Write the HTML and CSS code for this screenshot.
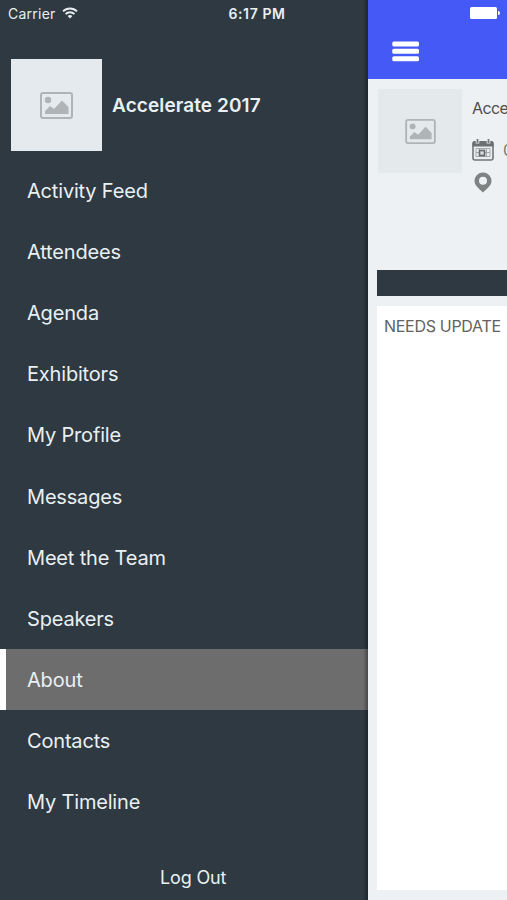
FILE: index.html
```
<!DOCTYPE html>
<html lang="en">
<head>
<meta charset="UTF-8">
<meta name="viewport" content="width=device-width, initial-scale=1.0">
<title>Accelerate 2017</title>
<link rel="stylesheet" href="styles.css">
</head>
<body>
<div class="app">
<nav class="drawer">
<div class="status-bar">
<span class="carrier">Carrier</span>
<svg class="wifi" width="16" height="12" viewBox="0 0 16 12" fill="none" stroke="#e6ecef" stroke-width="1.9">
<path d="M1 4.4a10 10 0 0 1 14 0"/>
<path d="M3.6 7a6.3 6.3 0 0 1 8.800 0"/>
<path d="M8 11.500L5.600 9.100a3.400 3.400 0 0 1 4.800 0z" fill="#e6ecef" stroke="none"/>
</svg>
<span class="time">6:17 PM</span>
</div>

<div class="event">
<div class="thumb">
<svg width="33" height="27" viewBox="0 0 33 27" fill="#b0b4b6">
<rect x="1" y="1" width="31" height="25" rx="2" fill="none" stroke="#b0b4b6" stroke-width="2"/>
<circle cx="8" cy="8" r="3.2"/>
<path d="M5 22v-3l5-5 4 3 8-8.500 6.500 6.500v7z"/>
</svg>
</div>
<div class="event-name">Accelerate 2017</div>
</div>

<ul class="menu">
<li class="menu-item">Activity Feed</li>
<li class="menu-item">Attendees</li>
<li class="menu-item">Agenda</li>
<li class="menu-item">Exhibitors</li>
<li class="menu-item">My Profile</li>
<li class="menu-item">Messages</li>
<li class="menu-item">Meet the Team</li>
<li class="menu-item">Speakers</li>
<li class="menu-item active">About</li>
<li class="menu-item">Contacts</li>
<li class="menu-item">My Timeline</li>
</ul>

<div class="logout"><span>Log Out</span></div>
</nav>

<main class="page">
<header class="page-header">
<svg class="battery" width="30" height="12" viewBox="0 0 30 12" fill="#fff">
<rect width="27" height="12" rx="1.500"/>
<path d="M28 4a2 2 0 0 1 0 4z"/>
</svg>
<svg class="burger" width="28" height="21" viewBox="0 0 28 21" fill="#fff">
<rect x="0.300" y="0.500" width="26.700" height="5" rx="1.500"/>
<rect x="0.300" y="7.800" width="26.700" height="5" rx="1.500"/>
<rect x="0.300" y="15.200" width="26.700" height="5" rx="1.500"/>
</svg>
</header>

<section class="summary">
<div class="thumb small">
<svg width="31" height="25" viewBox="0 0 33 27" fill="#b0b4b6">
<rect x="1" y="1" width="31" height="25" rx="2" fill="none" stroke="#b0b4b6" stroke-width="2"/>
<circle cx="8" cy="8" r="3.2"/>
<path d="M5 22v-3l5-5 4 3 8-8.500 6.500 6.500v7z"/>
</svg>
</div>
<div class="details">
<div class="title">Acce</div>
<div class="date">
<svg width="22" height="22" viewBox="0 0 22 22">
<rect x="1" y="3" width="20" height="18" rx="2" fill="#e9edef" stroke="#737678" stroke-width="1.600"/>
<path d="M0.500 7.500V4q0-2 2-2h17q2 0 2 2v3.500z" fill="#6d7072"/>
<path d="M5.500 0v4.500M16.500 0v4.500" stroke="#e9edef" stroke-width="3.600"/>
<path d="M5.500 0v4M16.500 0v4" stroke="#77797b" stroke-width="1.800"/>
<path d="M4 9.500h14v8H4zM4 13.500h14M7.500 9.500v8M14.500 9.500v8" fill="none" stroke="#a5a9ab"/>
<rect x="7.500" y="11.500" width="5" height="5" fill="#dde0e2" stroke="#686b6d" stroke-width="1.700"/>
</svg>
<span>0</span>
</div>
<div class="place">
<svg width="18" height="21" viewBox="0 0 18 21">
<path fill="#7f8283" fill-rule="evenodd" d="M9 0.500a8.500 8.500 0 0 1 8.500 8.500c0 4.500-4.500 7.500-8.500 11.500C5 16.500 0.500 13.500 0.500 9A8.500 8.500 0 0 1 9 0.500zM9 4.700a4 4 0 1 0 0 8 4 4 0 0 0 0-8z"/>
</svg>
</div>
</div>
</section>

<div class="divider"></div>
<section class="content">NEEDS UPDATE</section>
</main>
</div>
</body>
</html>
```

FILE: styles.css
```
* {
box-sizing: border-box;
}
body {
margin: 0;
font-family: Inter, "Liberation Sans", sans-serif;
background: #edf1f3;
}
.app {
display: flex;
width: 507px;
height: 900px;
overflow: hidden;
}
.drawer {
display: flex;
flex-direction: column;
width: 368px;
flex-shrink: 0;
background: linear-gradient(to right, transparent 363px, rgba(0,0,0,0.35) 368px), #2f3941;
color: #e9f0f3;
}
.status-bar {
display: flex;
align-items: center;
height: 27px;
padding-left: 8px;
font-size: 14px;
}
.carrier {
width: 48px;
letter-spacing: 0.25px;
}
.wifi {
margin: -2px 0 0 6px;
}
.time {
margin-left: 150.5px;
font-weight: 600;
letter-spacing: 0.6px;
}
.event {
display: flex;
align-items: center;
height: 92px;
margin-top: 32px;
padding-left: 10.5px;
}
.thumb {
display: flex;
align-items: center;
justify-content: center;
width: 91.5px;
height: 92px;
background: #e4eaed;
}
.event-name {
margin-left: 10px;
font-size: 19px;
font-weight: 600;
letter-spacing: 0.1px;
}
.menu {
list-style: none;
margin: 9.5px 0 0;
padding: 0;
}
.menu-item {
display: flex;
align-items: center;
height: 61.1px;
padding-left: 27px;
font-size: 20px;
letter-spacing: -0.18px;
}
.menu-item.active {
padding-left: 21px;
border-left: 6px solid #fff;
background: linear-gradient(to right, transparent 357px, rgba(0,0,0,0.35) 362px), #6d6d6d;
}
.logout {
margin-top: 34px;
padding-left: 160px;
font-size: 18px;
line-height: 22px;
letter-spacing: -0.15px;
}
.page {
display: flex;
flex-direction: column;
width: 139px;
overflow: hidden;
background: #edf1f3;
}
.page-header {
display: flex;
flex-direction: column;
height: 79px;
padding-top: 7px;
background: #4459f5;
}
.battery {
margin-left: 102px;
}
.burger {
margin: 22px 0 0 24px;
}
.summary {
display: flex;
height: 191px;
padding: 10px 0 0 10px;
}
.thumb.small {
width: 84px;
height: 84px;
flex-shrink: 0;
background: #e4e9eb;
}
.details {
margin-left: 10px;
color: #4c4e50;
font-size: 16px;
}
.title {
height: 39px;
line-height: 39px;
letter-spacing: -0.6px;
}
.date {
display: flex;
align-items: center;
height: 43px;
}
.date svg {
flex-shrink: 0;
}
.date span {
margin-left: 9px;
color: #77797b;
}
.place {
padding: 1px 0 0 2px;
}
.divider {
height: 26px;
margin-left: 9px;
background: #2f3941;
}
.content {
height: 584px;
margin: 10px 0 0 9px;
padding: 10px 0 0 7px;
background: #fff;
color: #626262;
font-size: 16px;
line-height: 20px;
letter-spacing: -0.3px;
white-space: nowrap;
}
```
